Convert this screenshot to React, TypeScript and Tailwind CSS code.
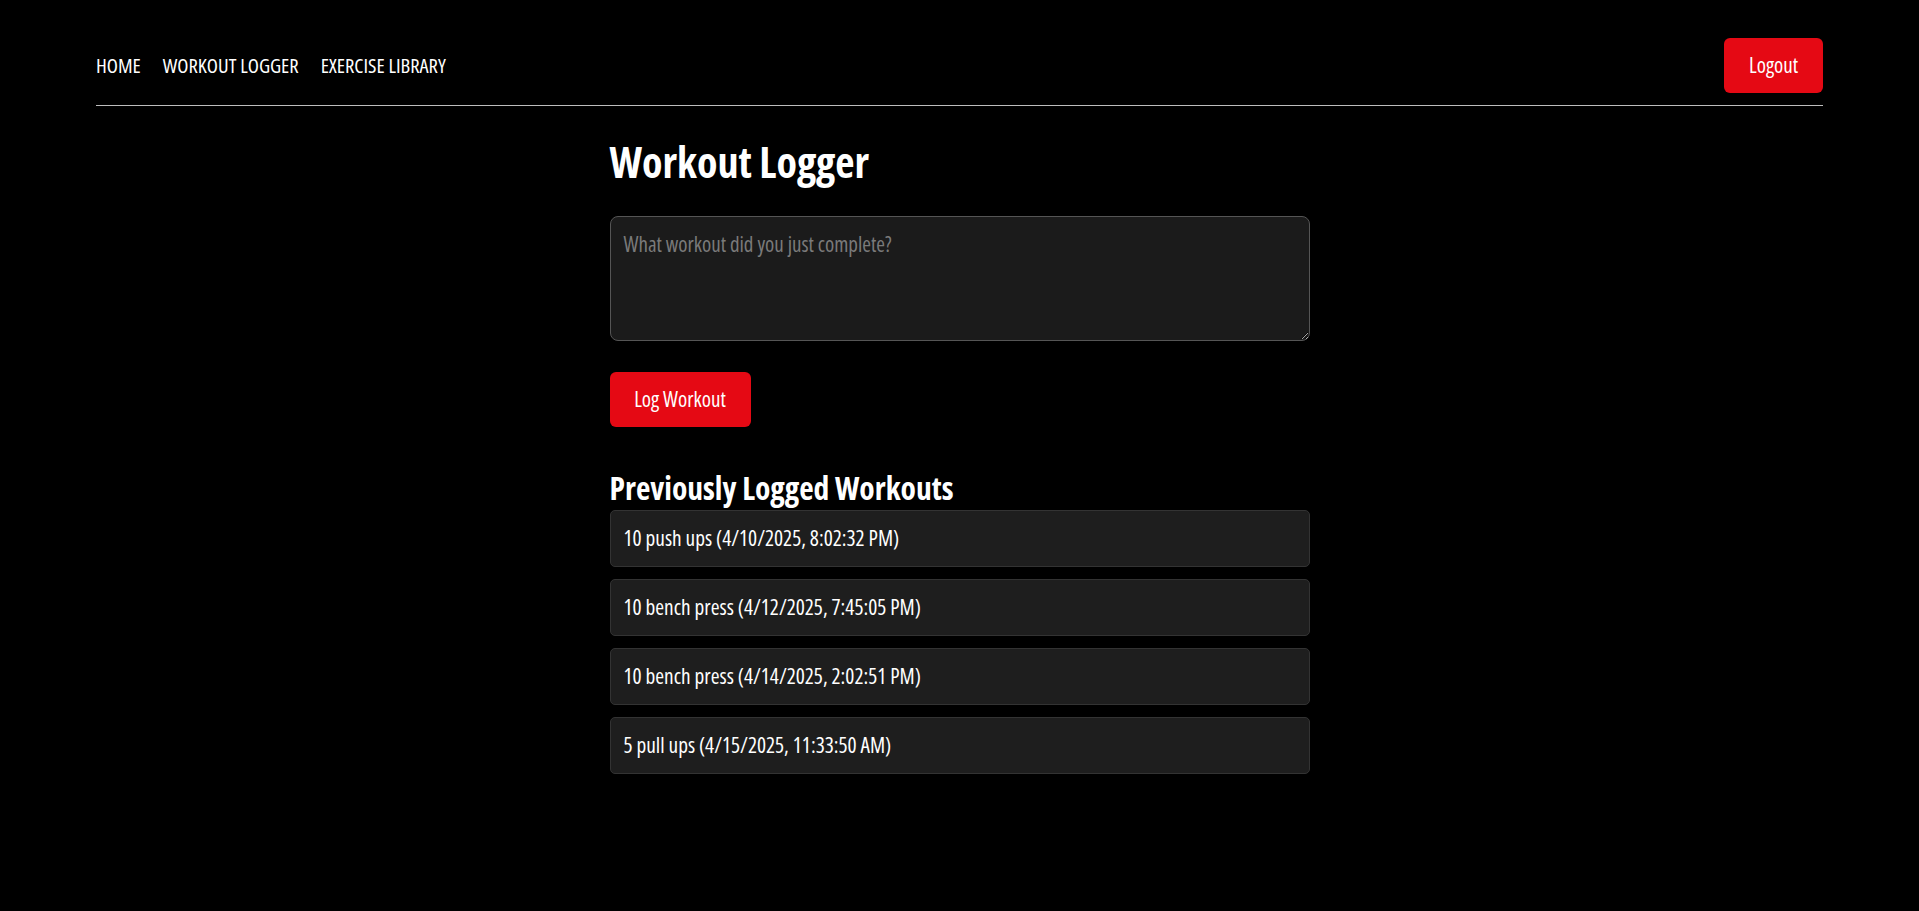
const workouts = [
  "10 push ups (4/10/2025, 8:02:32 PM)",
  "10 bench press (4/12/2025, 7:45:05 PM)",
  "10 bench press (4/14/2025, 2:02:51 PM)",
  "5 pull ups (4/15/2025, 11:33:50 AM)",
];

export default function App() {
  return (
    <div className="min-h-screen bg-black text-white font-['Open_Sans',sans-serif] [font-stretch:75%] font-medium">
      <header className="mx-[96px] flex items-center justify-between border-b border-[#bdbdbd] pt-[38px] pb-[12px]">
        <nav className="flex items-center gap-[22px] text-[20.5px] leading-none">
          <a className="text-white">HOME</a>
          <a className="text-white">WORKOUT LOGGER</a>
          <a className="text-white">EXERCISE LIBRARY</a>
        </nav>
        <button className="h-[55px] w-[99px] rounded-[6px] bg-[#e50914] text-[21px] text-white">
          Logout
        </button>
      </header>
      <main className="mx-auto w-[700px] pt-[35px]">
        <h1 className="text-[42px] font-bold leading-[42px]">Workout Logger</h1>
        <textarea
          placeholder="What workout did you just complete?"
          className="mt-[33px] block h-[125px] w-full rounded-[8px] border border-[#555] bg-[#1b1b1b] px-[13px] py-[12px] text-[21px] font-normal leading-[1.5] text-white placeholder:text-[#7a7a7a] outline-none"
        />
        <button className="mt-[31px] h-[55px] w-[141px] rounded-[6px] bg-[#e50914] text-[21px] text-white">
          Log Workout
        </button>
        <h2 className="mt-[45px] text-[31.5px] font-bold leading-[31.5px]">Previously Logged Workouts</h2>
        <ul className="mt-[6px] flex flex-col gap-[12px]">
          {workouts.map((w, i) => (
            <li
              key={i}
              className="flex h-[57px] items-center rounded-[5px] border border-[#333] bg-[#1e1e1e] px-[13px] text-[21.3px]"
            >
              {w}
            </li>
          ))}
        </ul>
      </main>
    </div>
  );
}
